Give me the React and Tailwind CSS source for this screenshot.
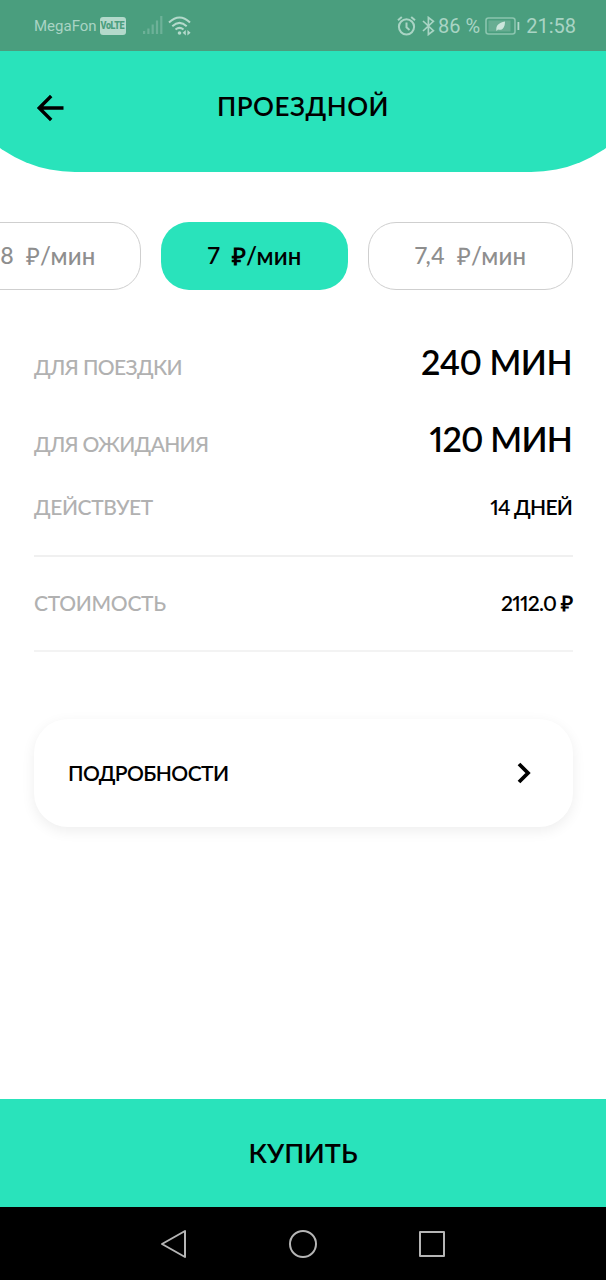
import React from 'react';

const RATES = [
  { id: 1, value: '6,8', width: 'w-[205px]' },
  { id: 2, value: '7', width: 'w-[187px]', active: true },
  { id: 3, value: '7,4', width: 'w-[205px]' },
];

export default function App() {
  return (
    <div className="flex h-[1280px] w-[606px] flex-col overflow-hidden bg-white font-['Lato','Open_Sans',sans-serif] font-medium proportional-nums text-black">
      {/* Header */}
      <header className="-mx-[54px] h-[172px] shrink-0 overflow-hidden rounded-b-[129px] bg-[#29e3bb]">
        <StatusBar />
        <div className="flex h-[112px] items-center pr-[90px] pl-[90px]">
          <button className="w-[30px]" aria-label="Назад">
            <svg className="mt-[2px] -ml-px" width="30" height="28" viewBox="0 0 30 28" fill="none" stroke="currentColor" strokeWidth="3.4">
              <path d="M28.5 14H4M16.2 2 4.2 14l12 12" />
            </svg>
          </button>
          <h1 className="flex-1 pr-[30px] pb-[2px] text-center text-[26px] leading-none font-semibold tracking-[0.5px]">ПРОЕЗДНОЙ</h1>
        </div>
      </header>

      {/* Rates */}
      <section className="mt-[50px] -ml-[64px] flex shrink-0 gap-[20px]">
        {RATES.map((r) => (
          <RateChip key={r.id} {...r} />
        ))}
      </section>

      <main className="flex flex-1 flex-col pr-[33px] pl-[34px]">
        <Row label="ДЛЯ ПОЕЗДКИ" value="240 МИН" className="mt-[48px] h-[48px]" labelCls="tracking-[-0.6px]" valueCls="pr-px tracking-[-0.5px]" large />
        <Row label="ДЛЯ ОЖИДАНИЯ" value="120 МИН" className="mt-[29px] h-[48px]" labelCls="tracking-[-0.7px]" valueCls="pr-px tracking-[-0.8px]" large />
        <Row label="ДЕЙСТВУЕТ" value="14 ДНЕЙ" className="mt-[28px] h-[32px]" labelCls="tracking-[-0.4px]" valueCls="pr-px tracking-[-0.8px]" />
        <div className="mt-[32px] h-[2px] bg-[#f0f0f0]" />
        <Row label="СТОИМОСТЬ" value="2112.0 ₽" className="mt-[30px] h-[32px]" labelCls="tracking-[-0.3px]" valueCls="pr-px tracking-[-0.75px]" />
        <div className="mt-[31px] h-[2px] bg-[#f3f3f3]" />

        <button className="mt-[67px] flex h-[108px] items-center justify-between rounded-[34px] bg-white pr-[41px] pl-[34px] shadow-[0_4px_14px_rgba(0,0,0,0.07)]">
          <span className="pb-[2px] text-[21px] leading-none font-semibold tracking-[-0.6px]">ПОДРОБНОСТИ</span>
          <svg width="18" height="22" viewBox="0 0 18 22" fill="none" stroke="currentColor" strokeWidth="3.8">
            <path d="m5 2 9 9-9 9" />
          </svg>
        </button>
      </main>

      <button className="flex h-[108px] shrink-0 items-center justify-center bg-[#29e3bb] pb-[2px] text-[27px] leading-none font-semibold">КУПИТЬ</button>
      <NavBar />
    </div>
  );
}

function RateChip({ value, width, active }) {
  return (
    <button className={`flex h-[68px] shrink-0 items-center justify-center gap-[12px] rounded-[28px] pb-px text-[24px] leading-none tracking-[0.15px] ${width} ${active ? 'bg-[#29e3bb] font-semibold text-black' : 'border border-[#cfcfcf] text-[#8e8e8e]'}`}>
      <span className="text-[23px]">{value}</span>
      <span>₽/мин</span>
    </button>
  );
}

function Row({ label, value, className, labelCls, valueCls, large }) {
  return (
    <div className={`flex shrink-0 items-baseline justify-between ${className}`}>
      <span className={`text-[21px] leading-[32px] text-[#b1b1b1] ${labelCls}`}>{label}</span>
      <span className={`font-semibold ${large ? 'text-[34px] leading-[48px]' : 'text-[21px] leading-[32px]'} ${valueCls}`}>{value}</span>
    </div>
  );
}

function StatusBar() {
  return (
    <div className="flex h-[50.5px] items-center justify-between bg-[#4a9e7e] pt-px pr-[84px] pl-[88px] font-[Roboto,sans-serif] font-normal normal-nums text-[#a9d4c4]">
      <div className="flex items-center">
        <span className="pt-px text-[15px] leading-none">MegaFon</span>
        <span className="ml-[3px] flex h-[18px] w-[26px] items-center justify-center rounded-[3px] bg-[#b3d9cb] text-[#4a9e7e]">
          <span className="scale-x-[.82] text-[11px] leading-none font-black tracking-[-0.5px]">VoLTE</span>
        </span>
        <svg className="ml-[17px]" width="21" height="19" viewBox="0 0 21 19" fill="#6db198">
          <path d="M0 15h2.200v3H0zM4.300 12.500h2.200V18H4.300zM8.600 8.500h2.200V18H8.600zM12.900 4.500h2.200V18h-2.200zM17.200 0h2.200v18h-2.200z" />
        </svg>
        <svg className="ml-[4px]" width="23" height="20" viewBox="0 0 23 20" fill="none" stroke="#b3d9cb" strokeWidth="2">
          <path d="M1 6.500Q11.500-3.500 22 6.500M4.300 10.200q7.200-6.600 14.400 0M7.500 13.600q4-3.400 8 0" />
          <circle cx="11.5" cy="17" r="1.8" fill="#b3d9cb" stroke="none" />
          <path d="m17.800 14-3.200 2.800 3.200 2.800zm1.600 0 3.200 2.800-3.200 2.800z" fill="#b3d9cb" stroke="none" />
        </svg>
      </div>
      <div className="flex items-center">
        <svg width="19" height="20" viewBox="0 0 19 20" fill="none" stroke="currentColor" strokeWidth="2">
          <circle cx="9.5" cy="10.8" r="7.6" />
          <path d="M9.500 6.500v4.800l3 2.600M1 4.300l3.800-3.200M18 4.300l-3.800-3.200" />
        </svg>
        <svg className="ml-[6px]" width="13" height="20" viewBox="0 0 13 20" fill="none" stroke="currentColor" strokeWidth="1.7">
          <path d="m1 5 10.400 9.600L6.400 18.500V1.500l5 3.900L1 15" />
        </svg>
        <span className="ml-[3px] pt-px text-[20px] leading-none">86 %</span>
        <svg className="ml-[5px]" width="36" height="18" viewBox="0 0 36 18" fill="none">
          <rect x="1" y="1" width="29" height="16" rx="2.5" stroke="#8bc5af" strokeWidth="1.6" />
          <rect x="3.5" y="3.5" width="22" height="11" fill="#67ad92" />
          <path d="M11.500 14c-1-5 2-8.500 8.500-9.500 0 6-2.500 9.500-7 8z" fill="#cce6dc" />
          <path d="M32.500 5h1.800v8h-1.800z" fill="#b3d9cb" />
        </svg>
        <span className="ml-[5px] pt-px text-[20px] leading-none">21:58</span>
      </div>
    </div>
  );
}

function NavBar() {
  return (
    <nav className="flex h-[73px] shrink-0 items-center justify-center gap-[101px] bg-black text-[#b5b5b5]">
      <svg width="28" height="30" viewBox="0 0 28 30" fill="none" stroke="currentColor" strokeWidth="2" strokeLinejoin="round">
        <path d="M25 2v26L2 15z" />
      </svg>
      <svg width="28" height="28" viewBox="0 0 28 28" fill="none" stroke="currentColor" strokeWidth="2">
        <circle cx="14" cy="14" r="13" />
      </svg>
      <svg width="28" height="28" viewBox="0 0 28 28" fill="none" stroke="currentColor" strokeWidth="2" strokeLinejoin="round">
        <path d="M2 2h24v24H2z" />
      </svg>
    </nav>
  );
}
